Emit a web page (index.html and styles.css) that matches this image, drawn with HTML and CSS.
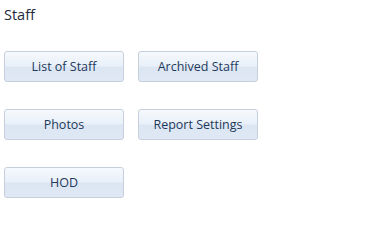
FILE: index.html
```html
<!DOCTYPE html>
<html lang="en">
<head>
  <meta charset="UTF-8" />
  <title>Staff</title>
  <link rel="stylesheet" href="styles.css">
</head>
<body>
  <main class="panel">
    <h1 class="panel-title">Staff</h1>
    <div class="btn-grid">
      <button class="tile-btn">List of Staff</button>
      <button class="tile-btn">Archived Staff</button>
      <button class="tile-btn">Photos</button>
      <button class="tile-btn">Report Settings</button>
      <button class="tile-btn">HOD</button>
    </div>
  </main>
</body>
</html>
```
FILE: styles.css
```css
body {
  margin: 0;
  background: #fff;
  font-family: "Open Sans", "Noto Sans", sans-serif;
}

.panel {
  padding: 5px 4px;
}

.panel-title {
  margin: 0;
  font-size: 14.5px;
  font-weight: normal;
  line-height: 20px;
  color: #1e2a3a;
}

.btn-grid {
  display: grid;
  grid-template-columns: 120px 120px;
  grid-auto-rows: 31px;
  column-gap: 14px;
  row-gap: 27px;
  margin-top: 26px;
}

.tile-btn {
  font-family: inherit;
  font-size: 12.5px;
  color: #1e395b;
  border: 1px solid #c5d0dc;
  border-radius: 3px;
  background: linear-gradient(to bottom, #f6f9fd 0%, #e9f0f9 48%, #dce6f3 52%, #dfe8f4 100%);
  padding: 0 0 1px;
  cursor: pointer;
}
```
